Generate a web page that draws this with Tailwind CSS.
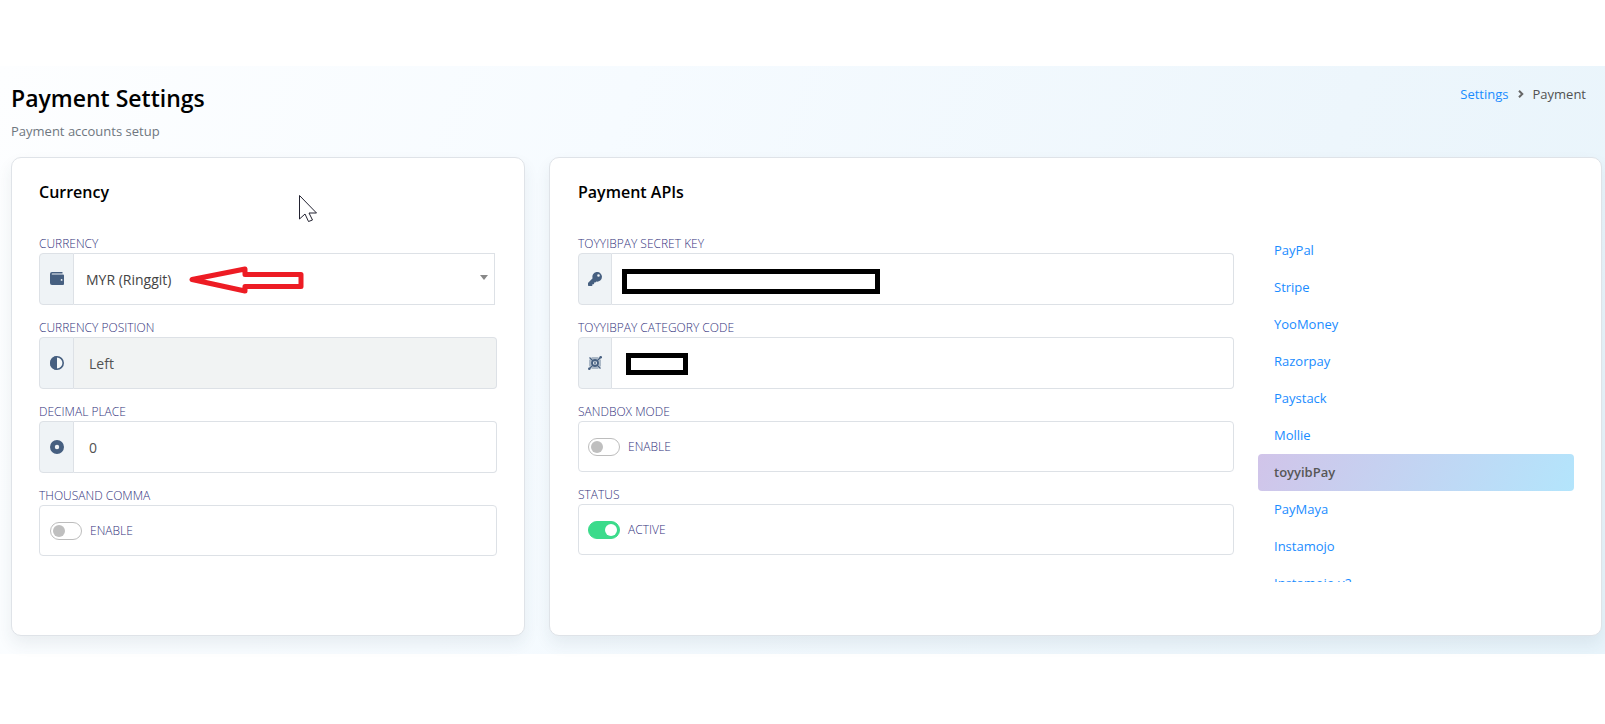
<!DOCTYPE html>
<html lang="en">
<head>
  <meta charset="UTF-8" />
  <meta name="viewport" content="width=device-width, initial-scale=1" />
  <title>Payment Settings</title>
  <script src="https://cdn.jsdelivr.net/npm/@tailwindcss/browser@4"></script>
</head>
<body class="bg-white py-[66px] font-['Open_Sans','Noto_Sans',sans-serif] text-[14px] text-[#525252]">
  <main class="bg-[linear-gradient(110deg,#fdfeff_0%,#f6fbff_35%,#edf6fc_75%,#e8f4fb_100%)] pt-4 pr-[3px] pb-[18px] pl-[11px]">
    <header class="flex items-start justify-between pr-4">
      <div>
        <h1 class="text-[23px] leading-8 font-semibold text-black">Payment Settings</h1>
        <p class="mt-[7px] text-[13px] leading-5 text-[#6f7780]">Payment accounts setup</p>
      </div>
      <nav class="flex items-center gap-2 pt-[2px] text-[13px] leading-5" aria-label="Breadcrumb">
        <a href="#" class="text-[#1a8cff]">Settings</a>
        <svg class="h-2 w-2" viewBox="0 0 8 8" fill="none" stroke="#666" stroke-width="2"><path d="M2 .7 5.3 4 2 7.3" /></svg>
        <span>Payment</span>
      </nav>
    </header>

    <div class="mt-4 grid grid-cols-[514fr_1053fr] gap-6">
      <!-- Currency -->
      <section class="relative min-h-[479px] rounded-[10px] border border-[#dfe3e8] bg-white px-[27px] pt-[22px] shadow-[0_8px_16px_rgba(40,60,80,0.08)]">
        <h2 class="text-[16px] leading-6 font-semibold text-black">Currency</h2>
        <form class="mt-7 flex flex-col gap-3 pt-px">
          <div>
            <label for="currency" class="block pt-[2px] text-[12px] leading-[18px] font-light text-[#33337d]">CURRENCY</label>
            <div class="relative flex h-[52px] pr-[2px]">
              <span class="flex w-[35px] shrink-0 items-center justify-center rounded-l border border-[#dde1e6] bg-[#eff3f6]">
                <svg class="h-[14px] w-[14px]" viewBox="0 0 14 14" fill="#465f80"><path d="M2 0h10.5v1.4H2.2a.5.5 0 0 0 0 1H13a1 1 0 0 1 1 1V12a1 1 0 0 1-1 1H2a2 2 0 0 1-2-2V2a2 2 0 0 1 2-2Zm9.6 7a.9.9 0 1 0 0 1.800.9.9 0 0 0 0-1.800Z" fill-rule="evenodd" /></svg>
              </span>
              <select id="currency" class="min-w-0 flex-1 appearance-none border border-l-0 border-[#dde1e6] bg-white px-3 text-[#444]">
                <option>MYR (Ringgit)</option>
              </select>
              <svg class="pointer-events-none absolute top-[22px] right-[9px] h-[5px] w-2" viewBox="0 0 8 5" fill="#888"><path d="M0 0h8L4 5Z" /></svg>
              <svg class="pointer-events-none absolute top-3 left-[150px] h-[30px] w-[116px]" viewBox="0 0 116 30" fill="none" stroke="#ed1c24" stroke-width="5"><path d="M3 14.500 56 4v5.500h56v12H56V26Z" stroke-linejoin="round" /></svg>
            </div>
          </div>
          <div>
            <label for="position" class="block pt-[2px] text-[12px] leading-[18px] font-light text-[#33337d]">CURRENCY POSITION</label>
            <div class="flex h-[52px]">
              <span class="flex w-[35px] shrink-0 items-center justify-center rounded-l border border-[#dde1e6] bg-[#eff3f6]">
                <svg class="h-[14px] w-[14px]" viewBox="0 0 14 14"><circle cx="7" cy="7" r="6.200" fill="#fff" fill-opacity=".4" stroke="#465f80" stroke-width="1.600" /><path d="M7 0a7 7 0 0 0 0 14Z" fill="#465f80" /></svg>
              </span>
              <input id="position" type="text" value="Left" readonly class="min-w-0 flex-1 rounded-r border border-l-0 border-[#dde1e6] bg-[#f1f3f3] px-[15px]" />
            </div>
          </div>
          <div>
            <label for="decimal" class="block pt-[2px] text-[12px] leading-[18px] font-light text-[#33337d]">DECIMAL PLACE</label>
            <div class="flex h-[52px]">
              <span class="flex w-[35px] shrink-0 items-center justify-center rounded-l border border-[#dde1e6] bg-[#eff3f6]">
                <svg class="h-[14px] w-[14px]" viewBox="0 0 14 14"><circle cx="7" cy="7" r="4.600" fill="none" stroke="#465f80" stroke-width="4.800" /></svg>
              </span>
              <input id="decimal" type="text" value="0" class="min-w-0 flex-1 rounded-r border border-l-0 border-[#dde1e6] bg-white px-[15px]" />
            </div>
          </div>
          <div>
            <p class="pt-[2px] text-[12px] leading-[18px] font-light text-[#33337d]">THOUSAND COMMA</p>
            <label class="flex h-[51px] items-center gap-2 rounded border border-[#dde1e6] px-[10px] text-[12px] font-light text-[#33337d]">
              <input type="checkbox" class="relative h-[18px] w-8 appearance-none rounded-full border border-[#bdbdbd] bg-white before:absolute before:top-[2px] before:left-[2px] before:h-3 before:w-3 before:rounded-full before:bg-[#bfbfbf] checked:border-[#3bdb8b] checked:bg-[#3bdb8b] checked:before:left-4 checked:before:bg-white" />
              ENABLE
            </label>
          </div>
        </form>
        <svg class="pointer-events-none absolute top-[37px] left-[287px] h-7 w-5" viewBox="0 0 20 28" fill="#fff" stroke="#222230"><path d="M.5.500v23.500l5.500-5 3.500 7.500 4-1.500-3.500-7h7.500Z" /></svg>
      </section>

      <!-- Payment APIs -->
      <section class="min-h-[479px] rounded-[10px] border border-[#dfe3e8] bg-white pt-[22px] pr-[27px] pl-7 shadow-[0_8px_16px_rgba(40,60,80,0.08)]">
        <h2 class="text-[16px] leading-6 font-semibold text-black">Payment APIs</h2>
        <div class="mt-7 grid grid-cols-[656fr_316fr] gap-6">
          <form class="flex flex-col gap-3 pt-px">
            <div>
              <label for="secret" class="block pt-[2px] text-[12px] leading-[18px] font-light text-[#33337d]">TOYYIBPAY SECRET KEY</label>
              <div class="relative flex h-[52px]">
                <span class="flex w-[34px] shrink-0 items-center justify-center rounded-l border border-[#dde1e6] bg-[#eff3f6]">
                  <svg class="h-[14px] w-[14px]" viewBox="0 0 512 512" fill="#465f80"><path d="M512 176a176 176 0 0 1-210 173l-24 27a24 24 0 0 1-18 8h-36v40a24 24 0 0 1-24 24h-40v40a24 24 0 0 1-24 24H24a24 24 0 0 1-24-24v-78a24 24 0 0 1 7-17l162-162A176 176 0 1 1 512 176Zm-176-48a48 48 0 1 0 96 0 48 48 0 0 0-96 0Z" /></svg>
                </span>
                <input id="secret" type="text" class="min-w-0 flex-1 rounded-r border border-l-0 border-[#dde1e6] bg-white px-[15px]" />
                <span class="absolute top-4 left-11 h-[25px] w-[258px] border-5 border-black bg-white"></span>
              </div>
            </div>
            <div>
              <label for="category" class="block pt-[2px] text-[12px] leading-[18px] font-light text-[#33337d]">TOYYIBPAY CATEGORY CODE</label>
              <div class="relative flex h-[52px]">
                <span class="flex w-[34px] shrink-0 items-center justify-center rounded-l border border-[#dde1e6] bg-[#eff3f6]">
                  <svg class="h-[14px] w-[14px]" viewBox="0 0 14 14" fill="none" stroke="#465f80"><circle cx="7" cy="7" r="3" stroke-width="2" /><path d="M7 5.500v3" stroke-width="1.400" /><path d="M3.500 2h7M3.500 12h7M2 3.500v7M12 3.500v7" stroke-width=".8" /><path d="M1.500 1.500l2.800 2.800M12.500 12.500 9.700 9.700M1 13l3.300-3.300M13 1 9.700 4.300" stroke-width="1.300" /><g fill="#465f80" stroke="none"><circle cx="1.300" cy="12.700" r="1.300" /><circle cx="12.700" cy="1.300" r="1.300" /></g></svg>
                </span>
                <input id="category" type="text" class="min-w-0 flex-1 rounded-r border border-l-0 border-[#dde1e6] bg-white px-[15px]" />
                <span class="absolute top-4 left-12 h-[22px] w-[62px] border-5 border-black bg-white"></span>
              </div>
            </div>
            <div>
              <p class="pt-[2px] text-[12px] leading-[18px] font-light text-[#33337d]">SANDBOX MODE</p>
              <label class="flex h-[51px] items-center gap-2 rounded border border-[#dde1e6] px-[9px] text-[12px] font-light text-[#33337d]">
                <input type="checkbox" class="relative h-[18px] w-8 appearance-none rounded-full border border-[#bdbdbd] bg-white before:absolute before:top-[2px] before:left-[2px] before:h-3 before:w-3 before:rounded-full before:bg-[#bfbfbf] checked:border-[#3bdb8b] checked:bg-[#3bdb8b] checked:before:left-4 checked:before:bg-white" />
                ENABLE
              </label>
            </div>
            <div>
              <p class="pt-[2px] text-[12px] leading-[18px] font-light text-[#33337d]">STATUS</p>
              <label class="flex h-[51px] items-center gap-2 rounded border border-[#dde1e6] px-[9px] text-[12px] font-light text-[#33337d]">
                <input type="checkbox" checked class="relative h-[18px] w-8 appearance-none rounded-full border border-[#bdbdbd] bg-white before:absolute before:top-[2px] before:left-[2px] before:h-3 before:w-3 before:rounded-full before:bg-[#bfbfbf] checked:border-[#3bdb8b] checked:bg-[#3bdb8b] checked:before:left-4 checked:before:bg-white" />
                ACTIVE
              </label>
            </div>
          </form>

          <nav class="h-[350px] overflow-hidden text-[13px] text-[#1a8cff]" aria-label="Payment providers">
            <a href="#" class="block px-4 leading-[37px]">PayPal</a>
            <a href="#" class="block px-4 leading-[37px]">Stripe</a>
            <a href="#" class="block px-4 leading-[37px]">YooMoney</a>
            <a href="#" class="block px-4 leading-[37px]">Razorpay</a>
            <a href="#" class="block px-4 leading-[37px]">Paystack</a>
            <a href="#" class="block px-4 leading-[37px]">Mollie</a>
            <a href="#" class="block rounded bg-[linear-gradient(120deg,#d1c4e9_0%,#b3e5fc_100%)] px-4 leading-[37px] font-semibold text-[#575757]">toyyibPay</a>
            <a href="#" class="block px-4 leading-[37px]">PayMaya</a>
            <a href="#" class="block px-4 leading-[37px]">Instamojo</a>
            <a href="#" class="block px-4 leading-[37px]">Instamojo v2</a>
          </nav>
        </div>
      </section>
    </div>
  </main>
</body>
</html>
